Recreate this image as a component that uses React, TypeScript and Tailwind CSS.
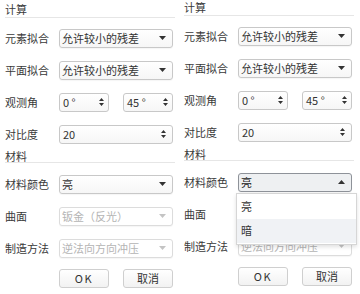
import React from "react";

const FONT = '"Noto Sans CJK SC", "Noto Sans", "Liberation Sans", sans-serif';

function Down({ color = "#333" }: { color?: string }) {
  return (
    <svg width="7" height="4" viewBox="0 0 7 4" className="block">
      <path d="M0 0 L7 0 L3.5 4 Z" fill={color} />
    </svg>
  );
}
function Up({ color = "#333" }: { color?: string }) {
  return (
    <svg width="7" height="4" viewBox="0 0 7 4" className="block">
      <path d="M0 4 L7 4 L3.5 0 Z" fill={color} />
    </svg>
  );
}
function Spin() {
  return (
    <svg width="5" height="8" viewBox="0 0 5 8" className="block">
      <path d="M0 3 L2.5 0 L5 3 Z M0 5 L2.5 8 L5 5 Z" fill="#333" />
    </svg>
  );
}

function Select({
  value,
  disabled,
  focused,
  hidden,
  children,
}: {
  value: string;
  disabled?: boolean;
  focused?: boolean;
  hidden?: boolean;
  children?: React.ReactNode;
}) {
  const cls = focused
    ? "border-[#8e9299] bg-[#eef0f2] text-[#222]"
    : disabled
    ? "border-[#dcdcdc] bg-white text-[#b4b4b4]"
    : "border-[#c8c8c8] bg-gradient-to-b from-white to-[#f6f6f6] text-[#333]";
  return (
    <div className={`relative flex h-[19px] w-[114px] items-center rounded-[3px] border pl-[2px] text-[11px] shadow-[0_1px_1px_rgba(0,0,0,0.04)] ${cls}`}>
      <span className={`leading-none ${hidden ? "invisible" : ""}`}>{value}</span>
      <span className="absolute right-[6px] top-1/2 -translate-y-1/2">
        {focused ? <Up /> : <Down color={disabled ? "#c4c4c4" : "#333"} />}
      </span>
      {children}
    </div>
  );
}

function Spinner({ value }: { value: string }) {
  return (
    <div className="relative flex h-[19px] w-[50px] items-center rounded-[3px] border border-[#c8c8c8] bg-gradient-to-b from-white to-[#f6f6f6] pl-[3px] text-[11px] text-[#333]">
      <span className="leading-none">{value}</span>
      <span className="absolute right-[4px] top-1/2 -translate-y-1/2">
        <Spin />
      </span>
    </div>
  );
}

function Row({ label, children }: { label: string; children: React.ReactNode }) {
  return (
    <div className="flex h-[32px] items-center">
      <div className="w-[54px] shrink-0 text-[11px] leading-none text-[#3a3a3a]">{label}</div>
      {children}
    </div>
  );
}

function Button({ children, wide }: { children: React.ReactNode; wide?: boolean }) {
  return (
    <div
      className={`flex h-[19px] w-[50px] items-center justify-center rounded-[3px] border border-[#cfcfcf] bg-gradient-to-b from-white to-[#f2f2f2] text-[11px] leading-none text-[#333] ${
        wide ? "tracking-[1.5px]" : ""
      }`}
    >
      {children}
    </div>
  );
}

function Panel({ open, top }: { open?: boolean; top: string }) {
  return (
    <div className={`flex w-[179px] shrink-0 flex-col pl-[5px] pr-[4px] ${top}`}>
      <div className="flex h-[16px] items-center border-b border-[#e6e6e6] text-[11px] leading-none text-[#3a3a3a]">
        计算
      </div>
      <div className="mt-[4px] flex flex-col">
        <Row label="元素拟合">
          <Select value="允许较小的残差" />
        </Row>
        <Row label="平面拟合">
          <Select value="允许较小的残差" />
        </Row>
        <Row label="观测角">
          <div className="flex gap-[14px]">
            <Spinner value="0 °" />
            <Spinner value="45 °" />
          </div>
        </Row>
        <Row label="对比度">
          <div className="relative flex h-[19px] w-[114px] items-center rounded-[3px] border border-[#c8c8c8] bg-gradient-to-b from-white to-[#f6f6f6] pl-[3px] text-[11px] text-[#333]">
            <span className="leading-none">20</span>
            <span className="absolute right-[6px] top-1/2 -translate-y-1/2">
              <Spin />
            </span>
          </div>
        </Row>
      </div>
      <div className="flex h-[13px] items-start border-b border-[#e6e6e6] pt-[1px] text-[11px] leading-none text-[#3a3a3a]">
        材料
      </div>
      <div className="mt-[5px] flex flex-col">
        <Row label="材料颜色">
          <Select value="亮" focused={open}>
            {open && (
              <div className="absolute left-[-3px] top-[19px] z-10 w-[121px] border border-[#d6d6d6] bg-white py-[1px] shadow-[0_2px_4px_rgba(0,0,0,0.12)]">
                <div className="flex h-[24px] items-center pl-[4px] text-[11px] leading-none text-[#333]">亮</div>
                <div className="flex h-[24px] items-center bg-[#f0f2f5] pl-[4px] text-[11px] leading-none text-[#333]">暗</div>
              </div>
            )}
          </Select>
        </Row>
        <Row label="曲面">
          <Select value="钣金（反光）" disabled hidden={open} />
        </Row>
        <Row label="制造方法">
          <Select value="逆法向方向冲压" disabled />
        </Row>
      </div>
      <div className="mt-[5px] flex gap-[14px] pl-[54px]">
        <Button wide>OK</Button>
        <Button>取消</Button>
      </div>
    </div>
  );
}

export default function App() {
  return (
    <div className="flex h-[294px] w-[360px] overflow-hidden bg-white" style={{ fontFamily: FONT }}>
      <Panel top="pt-[2px]" />
      <Panel open top="pt-0" />
    </div>
  );
}
